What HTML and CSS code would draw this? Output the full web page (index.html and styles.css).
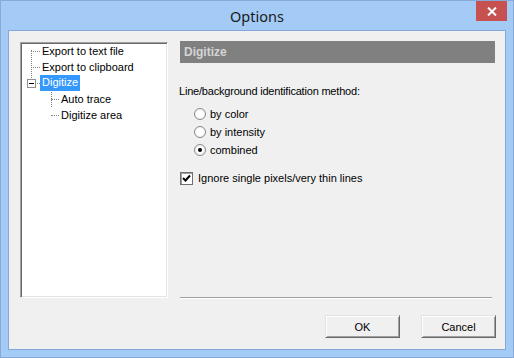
FILE: index.html
```html
<!DOCTYPE html>
<html lang="en">

<head>
    <meta charset="UTF-8">
    <title>Options</title>
    <link rel="stylesheet" href="styles.css">
</head>

<body>
    <div class="window">
        <div class="titlebar">
            <span class="title">Options</span>
            <div class="close-btn">
                <svg width="10" height="9" viewBox="0 0 10 9">
                    <path d="M1 0.5 L9 8.5 M9 0.5 L1 8.5" stroke="#fff" stroke-width="2" />
                </svg>
            </div>
        </div>

        <div class="client">
            <div class="main-row">
                <!-- Arvore de paginas -->
                <div class="tree">
                    <div class="tree-vline"></div>
                    <div class="tree-item">
                        <span class="hline"></span><span class="label">Export to text file</span>
                    </div>
                    <div class="tree-item">
                        <span class="hline"></span><span class="label">Export to clipboard</span>
                    </div>
                    <div class="tree-item">
                        <span class="expander"><span class="minus"></span></span><span class="hline short"></span><span class="label selected">Digitize</span>
                    </div>
                    <div class="tree-children">
                        <div class="child-vline"></div>
                        <div class="tree-item child">
                            <span class="hline"></span><span class="label">Auto trace</span>
                        </div>
                        <div class="tree-item child">
                            <span class="hline"></span><span class="label">Digitize area</span>
                        </div>
                    </div>
                </div>

                <!-- Pagina selecionada -->
                <div class="page">
                    <div class="page-header">Digitize</div>
                    <p class="group-label">Line/background identification method:</p>
                    <div class="radios">
                        <label class="radio"><span class="radio-dot"></span>by color</label>
                        <label class="radio"><span class="radio-dot"></span>by intensity</label>
                        <label class="radio"><span class="radio-dot checked"></span>combined</label>
                    </div>
                    <label class="check">
                        <span class="check-box">
                            <svg width="9" height="9" viewBox="0 0 9 9">
                                <path d="M1 4 L3.5 6.5 L8 1.5" stroke="#000" stroke-width="2" fill="none" />
                            </svg>
                        </span>
                        Ignore single pixels/very thin lines
                    </label>
                    <div class="separator"></div>
                </div>
            </div>

            <div class="buttons">
                <button class="btn">OK</button>
                <button class="btn">Cancel</button>
            </div>
        </div>
    </div>
</body>

</html>
```

FILE: styles.css
```css
* {
    margin: 0;
    padding: 0;
    box-sizing: border-box;
}

body {
    width: 514px;
    height: 358px;
    overflow: hidden;
    font-family: Tahoma, "Liberation Sans", sans-serif;
    font-size: 11px;
    color: #000;
}

/* Janela */
.window {
    width: 514px;
    height: 358px;
    background: #a3cbf6;
    border: 1px solid #86a9d6;
    display: flex;
    flex-direction: column;
}

.titlebar {
    height: 29px;
    position: relative;
    display: flex;
    justify-content: center;
    align-items: center;
}

.title {
    font-family: "Noto Sans", "Open Sans", sans-serif;
    font-size: 14.5px;
    color: #1a1a1a;
}

.close-btn {
    position: absolute;
    right: 6px;
    top: 0;
    width: 31px;
    height: 20px;
    background: #c75050;
    display: flex;
    justify-content: center;
    align-items: center;
}

/* Area cliente */
.client {
    margin: 0 7px 0 7px;
    height: 320px;
    background: #f0f0f0;
    border: 1px solid #84a9d9;
    padding: 11px 9px 0 11px;
    display: flex;
    flex-direction: column;
}

.main-row {
    display: flex;
    height: 257px;
}

/* Arvore */
.tree {
    width: 148px;
    height: 256px;
    background: #fff;
    border-top: 1px solid #a0a0a0;
    border-left: 1px solid #a0a0a0;
    border-right: 1px solid #fff;
    border-bottom: 1px solid #fff;
    box-shadow: inset 1px 1px 0 #696969, inset -1px -1px 0 #e3e3e3;
    padding: 0 0 0 6px;
    position: relative;
}

.tree-vline {
    position: absolute;
    left: 10px;
    top: 7px;
    height: 32px;
    border-left: 1px dotted #808080;
}

.tree-item {
    height: 16px;
    display: flex;
    align-items: center;
    position: relative;
}

.hline {
    width: 9px;
    margin-left: 4px;
    border-top: 1px dotted #808080;
}

.hline.short {
    width: 3px;
    margin-left: 1px;
}

.label {
    padding: 1px 2px;
    white-space: nowrap;
    line-height: 13px;
}

.label.selected {
    background: #3399ff;
    color: #fff;
    padding: 1px 2px 2px;
}

.expander {
    width: 9px;
    height: 9px;
    border: 1px solid #909090;
    background: #fff;
    display: flex;
    justify-content: center;
    align-items: center;
}

.minus {
    width: 5px;
    border-top: 1px solid #000;
}

.tree-children {
    position: relative;
    padding-left: 20px;
}

.child-vline {
    position: absolute;
    left: 24px;
    top: -5px;
    height: 21px;
    border-left: 1px dotted #808080;
}

.tree-children .hline {
    width: 8px;
}

/* Pagina */
.page {
    margin-left: 12px;
    width: 315px;
    display: flex;
    flex-direction: column;
}

.page-header {
    margin-top: -1px;
    height: 22px;
    background: #808080;
    color: #d4d4d4;
    font-weight: bold;
    font-size: 12px;
    padding: 0 4px;
    line-height: 22px;
}

.group-label {
    margin-top: 22px;
    margin-left: -1px;
    line-height: 13px;
    letter-spacing: -0.2px;
}

.radios {
    margin-top: 7px;
    padding-left: 14px;
    display: flex;
    flex-direction: column;
}

.radio {
    height: 18px;
    display: flex;
    align-items: center;
}

.radio-dot {
    width: 12px;
    height: 12px;
    border-radius: 50%;
    border: 1px solid #8a8a8a;
    background: radial-gradient(circle, #fff 40%, #e6e6e6 100%);
    margin-right: 4px;
    display: flex;
    justify-content: center;
    align-items: center;
}

.radio-dot.checked::after {
    content: "";
    width: 4px;
    height: 4px;
    border-radius: 50%;
    background: #000;
}

.check {
    margin-top: 11px;
    display: flex;
    align-items: center;
    height: 16px;
}

.check-box {
    width: 13px;
    height: 13px;
    background: #fff;
    border: 1px solid #707070;
    box-shadow: inset 1px 1px 0 #a0a0a0;
    display: flex;
    justify-content: center;
    align-items: center;
    margin-right: 5px;
}

.separator {
    margin-top: auto;
    margin-right: 3px;
    border-top: 1px solid #a0a0a0;
    border-bottom: 1px solid #fff;
}

/* Botoes */
.buttons {
    margin-top: 16px;
    display: flex;
    justify-content: flex-end;
    gap: 21px;
}

.btn {
    width: 75px;
    height: 23px;
    font-family: Tahoma, "Liberation Sans", sans-serif;
    font-size: 11px;
    background: #f0f0f0;
    border-top: 1px solid #e3e3e3;
    border-left: 1px solid #e3e3e3;
    border-right: 1px solid #696969;
    border-bottom: 1px solid #696969;
    box-shadow: inset 1px 1px 0 #fff, inset -1px -1px 0 #a0a0a0;
    color: #000;
}
```
